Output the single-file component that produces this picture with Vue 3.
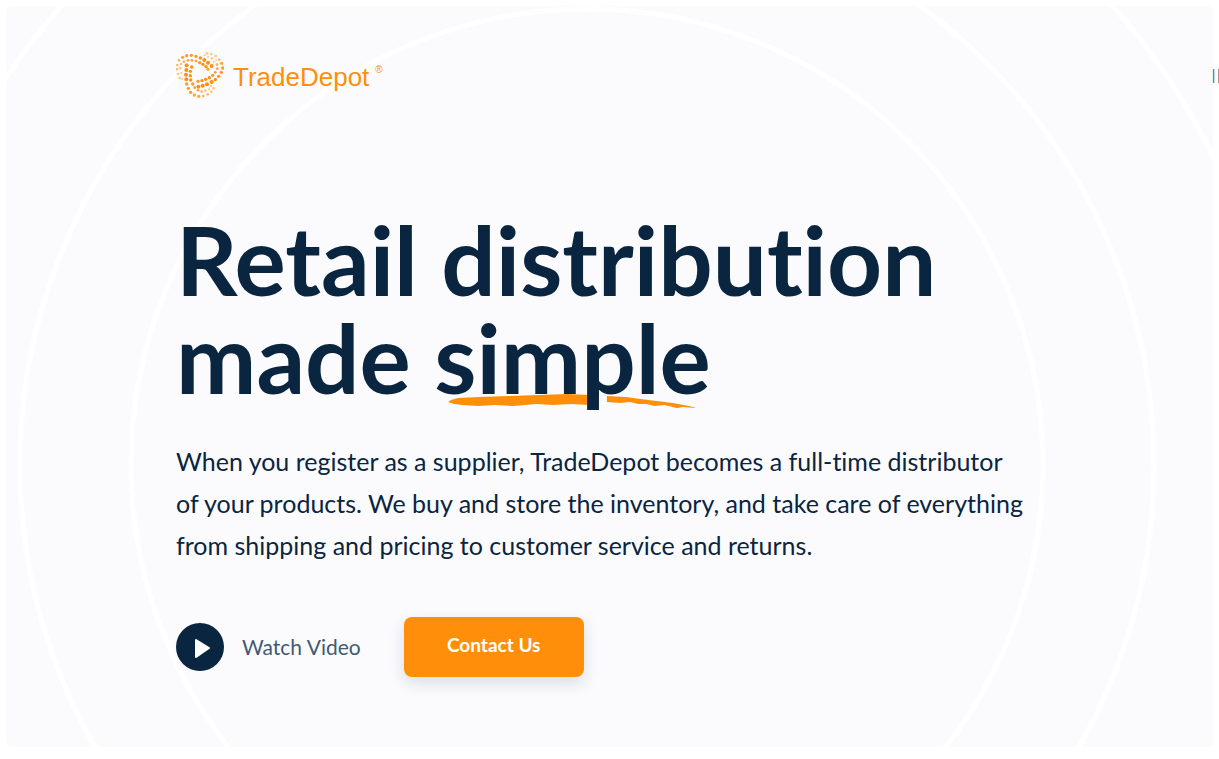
<script setup>
const rings = [456, 567, 698]

/* Brand mark: x, y, radius, opacity */
const dots = [
  [38, 37, 5, 0.8], [50, 32, 5, 0.9], [64, 31, 5, 0.9], [78, 34, 5, 0.9], [91, 39, 5, 1], [103, 45, 6, 1], [114, 53, 6, 1], [125, 63, 6, 1],
  [42, 50, 4, 0.7], [54, 46, 4, 0.8], [66, 46, 4, 0.9], [78, 48, 4, 0.9], [89, 53, 5, 0.9], [99, 58, 5, 1], [108, 65, 5, 1], [114, 73, 5, 0.8],
  [27, 46, 4, 0.7], [22, 60, 4, 0.6], [21, 73, 4, 0.6], [24, 87, 4, 0.5], [33, 57, 4, 0.5], [31, 70, 4, 0.5], [34, 84, 3, 0.5], [29, 99, 4, 0.5], [36, 102, 3, 0.5],
  [50, 61, 6, 1], [49, 75, 6, 1], [48, 89, 6, 1], [49, 103, 6, 1], [50, 117, 5, 0.9], [55, 130, 5, 0.9], [62, 142, 5, 0.9], [73, 150, 5, 0.8], [86, 154, 5, 0.8], [100, 153, 4, 0.7], [113, 148, 4, 0.6], [124, 140, 4, 0.5], [131, 130, 4, 0.5],
  [65, 66, 5, 1], [61, 79, 5, 1], [61, 92, 5, 1], [62, 105, 5, 1], [68, 117, 5, 0.9], [74, 128, 4, 0.9], [84, 136, 4, 0.8], [95, 140, 4, 0.6], [106, 137, 4, 0.5], [117, 133, 3, 0.5], [123, 123, 3, 0.5],
  [85, 125, 6, 1], [98, 122, 6, 1], [111, 118, 6, 1], [125, 111, 6, 1], [136, 104, 5, 1], [146, 94, 5, 0.9], [154, 82, 5, 0.9], [158, 69, 5, 0.9], [155, 55, 5, 0.8], [148, 44, 4, 0.6],
  [84, 109, 5, 0.9], [96, 107, 5, 1], [107, 103, 5, 1], [118, 98, 5, 1], [128, 91, 5, 0.9], [136, 82, 4, 0.9], [142, 71, 4, 0.8], [141, 59, 4, 0.7], [131, 50, 3, 0.5],
  [104, 31, 3, 0.5], [111, 25, 4, 0.5], [124, 27, 4, 0.5], [137, 33, 4, 0.5], [114, 35, 3, 0.5], [126, 40, 4, 0.5], [138, 46, 3, 0.5],
]
</script>

<template>
  <div class="page">
    <div class="hero">
      <svg class="rings" viewBox="0 0 1207 741" preserveAspectRatio="xMidYMid slice" aria-hidden="true">
        <circle v-for="r in rings" :key="r" cx="581" cy="459" :r="r" />
      </svg>

      <header class="top">
        <a class="brand" href="#" aria-label="TradeDepot">
          <svg class="mark" viewBox="18 18 144 144" aria-hidden="true">
            <circle v-for="(d, i) in dots" :key="i" :cx="d[0]" :cy="d[1]" :r="d[2]" :opacity="d[3]" />
          </svg>
          <span class="name">TradeDepot</span>
          <sup class="reg">®</sup>
        </a>
      </header>

      <main class="content">
        <h1>
          Retail distribution<br />made
          <span class="marked">
            <svg class="stroke" viewBox="0 0 246 14" preserveAspectRatio="none" aria-hidden="true">
              <path d="M0 8 L3 6 L10 4 L30 3 L60 2 L90 1 L118 0 L140 1 L140 11 L122 10 L104 11 L88 10 L64 12 L46 11 L30 12 L14 11 L6 10 Z M157 2 L176 3 L190 5 L206 7 L222 9 L238 12 L246 14 L232 13 L226 14 L214 11 L204 12 L196 10 L188 10 L180 8 L170 9 L157 8 Z" />
            </svg>
            <span class="word">simple</span>
          </span>
        </h1>
        <p class="lead">
          When you register as a supplier, TradeDepot becomes a full-time distributor<br />
          of your products. We buy and store the inventory, and take care of everything<br />
          from shipping and pricing to customer service and returns.
        </p>
        <div class="actions">
          <button class="watch" type="button">
            <svg class="play" viewBox="0 0 48 48" aria-hidden="true">
              <circle cx="24" cy="24" r="24" fill="#0a2540" />
              <path d="M20 17 L33 25 L20 34 Z" fill="#fff" stroke="#fff" stroke-width="2" stroke-linejoin="round" />
            </svg>
            <span>Watch Video</span>
          </button>
          <a class="contact" href="#">Contact Us</a>
        </div>
      </main>
    </div>
    <a class="offside" href="#">IE</a>
  </div>
</template>

<style>
body {
  background: #fff;
}
</style>

<style scoped>
.page {
  position: relative;
  box-sizing: border-box;
  min-height: 100vh;
  padding: 6px 6px 12px;
  display: flex;
  overflow: hidden;
  font-family: Lato, "Liberation Sans", sans-serif;
  font-variant-ligatures: no-common-ligatures;
  color: #0a2540;
}
.hero {
  position: relative;
  flex: 1;
  overflow: hidden;
  border-radius: 6px;
  background: #fbfbfe;
}
.rings {
  position: absolute;
  inset: 0;
  width: 100%;
  height: 100%;
}
.rings circle {
  fill: none;
  stroke: #fff;
  stroke-width: 5;
}
.top,
.content {
  position: relative;
  padding-left: 170px;
}
.top {
  padding-top: 45px;
}
.brand {
  display: inline-flex;
  align-items: center;
  color: #ff8f0a;
  text-decoration: none;
  font-family: "Liberation Sans", Arial, sans-serif;
}
.mark {
  width: 48px;
  height: 48px;
  fill: #ff8f0a;
}
.name {
  margin-left: 9px;
  padding-top: 4px;
  font-size: 26px;
  line-height: 44px;
}
.reg {
  margin: 0 0 10px 6px;
  font-size: 10px;
  line-height: 12px;
}
h1 {
  margin: 108px 0 0;
  font-size: 96px;
  font-weight: 700;
  line-height: 98px;
  white-space: nowrap;
}
.marked {
  position: relative;
  display: inline-block;
}
.word {
  position: relative;
}
.stroke {
  position: absolute;
  left: 5%;
  bottom: -2px;
  width: 90%;
  height: 14px;
  fill: #ff8f0a;
}
.lead {
  margin: 34px 0 0;
  font-size: 25px;
  line-height: 42px;
  white-space: nowrap;
}
.actions {
  display: flex;
  align-items: center;
  gap: 43px;
  margin-top: 51px;
}
.watch {
  display: flex;
  align-items: center;
  gap: 18px;
  padding: 0;
  border: 0;
  background: none;
  color: #425a70;
  font: 400 21px/24px Lato, sans-serif;
}
.play {
  width: 48px;
  height: 48px;
}
.contact {
  box-sizing: border-box;
  width: 180px;
  padding: 16px 0 20px;
  border-radius: 8px;
  background: #ff8f0a;
  box-shadow: 0 6px 16px rgba(10, 37, 64, 0.14);
  color: #fff;
  font: 700 19px/24px Lato, sans-serif;
  text-align: center;
  text-decoration: none;
}
.offside {
  position: absolute;
  top: 63px;
  left: calc(100% - 8px);
  color: #425a70;
  font: 300 20px/24px Lato, sans-serif;
  text-decoration: none;
}
</style>
